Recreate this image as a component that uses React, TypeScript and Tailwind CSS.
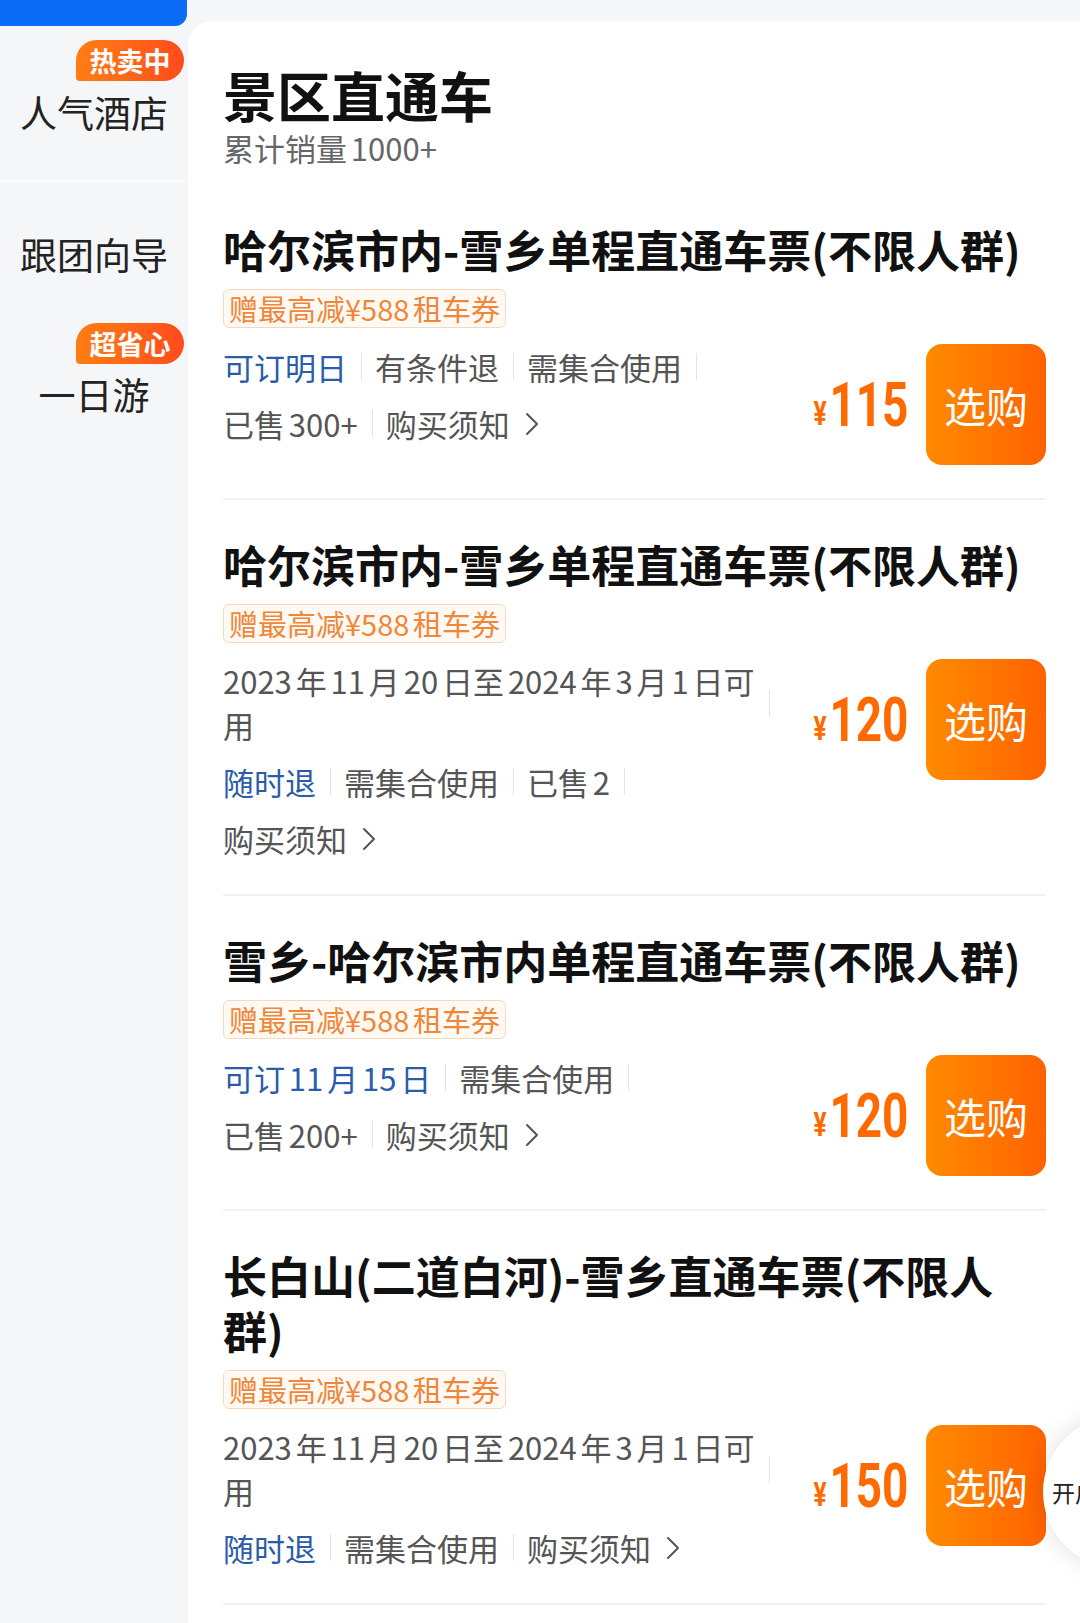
import React from 'react';

type Meta = { text: React.ReactNode; blue?: boolean; last?: boolean; tight?: boolean };

type Product = {
  title: string;
  price: number;
  rows: Meta[][];
};

const dateText = (
  <>
    2023年11月20日至2024年3月1日可
    <br />用
  </>
);

const notice: Meta = { text: '购买须知', last: true };

const products: Product[] = [
  {
    title: '哈尔滨市内-雪乡单程直通车票(不限人群)',
    price: 115,
    rows: [
      [{ text: '可订明日', blue: true }, { text: '有条件退' }, { text: '需集合使用' }],
      [{ text: '已售300+' }, notice]
    ]
  },
  {
    title: '哈尔滨市内-雪乡单程直通车票(不限人群)',
    price: 120,
    rows: [[{ text: dateText, tight: true }], [{ text: '随时退', blue: true }, { text: '需集合使用' }, { text: '已售2' }], [notice]]
  },
  {
    title: '雪乡-哈尔滨市内单程直通车票(不限人群)',
    price: 120,
    rows: [
      [{ text: '可订11月15日', blue: true }, { text: '需集合使用' }],
      [{ text: '已售200+' }, notice]
    ]
  },
  {
    title: '长白山(二道白河)-雪乡直通车票(不限人群)',
    price: 150,
    rows: [[{ text: dateText, tight: true }], [{ text: '随时退', blue: true }, { text: '需集合使用' }, notice]]
  }
];

function Badge({ label, top }: { label: string; top: string }) {
  return (
    <span
      className={`absolute right-[4px] ${top} flex h-[41px] w-[108px] items-center justify-center rounded-[21px] rounded-bl-[4px] bg-gradient-to-r from-[#ff7d12] to-[#ff4a1c] text-[27px] font-bold leading-none text-white`}
    >
      {label}
    </span>
  );
}

function Sidebar() {
  return (
    <aside className="flex w-[188px] shrink-0 flex-col bg-[#f5f6f8]">
      <div className="h-[26px] w-[187px] rounded-br-[12px] bg-[#0b6cf6]" />
      <div className="relative h-[156px] border-b-2 border-[#fafbfc] text-center">
        <Badge label="热卖中" top="top-[14px]" />
        <p className="pt-[66px] text-[37px] leading-[40px] text-[#222]">人气酒店</p>
      </div>
      <div className="h-[130px] text-center">
        <p className="pt-[52px] text-[37px] leading-[40px] text-[#222]">跟团向导</p>
      </div>
      <div className="relative h-[120px] text-center">
        <Badge label="超省心" top="top-[11px]" />
        <p className="pt-[62px] text-[37px] leading-[40px] text-[#222]">一日游</p>
      </div>
    </aside>
  );
}

function Chevron() {
  return (
    <svg viewBox="0 0 14 24" className="ml-[15px] h-[24px] w-[14px]" fill="none" stroke="#555" strokeWidth="2" strokeLinecap="round" strokeLinejoin="round">
      <polyline points="2,2 12,12 2,22" />
    </svg>
  );
}

function MetaItem({ item }: { item: Meta }) {
  if (item.last) {
    return (
      <div className="flex items-center">
        <span>{item.text}</span>
        <Chevron />
      </div>
    );
  }
  return (
    <div className="flex items-center">
      <span className={`${item.blue ? 'text-[#2b5ca8]' : ''} ${item.tight ? 'leading-[44px]' : ''}`}>{item.text}</span>
      <span className="ml-[14px] mr-[13px] h-[27px] w-px shrink-0 bg-[#e4e4e4]" />
    </div>
  );
}

function ProductRow({ product }: { product: Product }) {
  return (
    <div className="border-b-2 border-[#f2f2f2] pb-[33px] pt-[37px]">
      <h3 className="text-[44px] font-bold leading-[55px] text-[#111]">{product.title}</h3>
      <div className="mt-[12px] inline-flex h-[39px] items-center rounded-[6px] border border-[#f6d8bf] bg-[#fff9f3] px-[5px] text-[29px] leading-none text-[#ef873b]">
        赠最高减¥588租车券
      </div>
      <div className="mt-[16px] flex items-start">
        <div className="flex min-w-0 flex-1 flex-col gap-y-[12px] text-[31px] leading-[45px] text-[#555]">
          {product.rows.map((row, r) => (
            <div key={r} className="flex items-center">
              {row.map((m, i) => (
                <MetaItem key={i} item={m} />
              ))}
            </div>
          ))}
        </div>
        <div className="flex shrink-0 items-center">
          <span className="-ml-[34px] inline-flex origin-right scale-x-[0.74] items-end font-['Roboto',sans-serif] font-bold text-[#ff6a00]">
            <span className="mb-[6px] mr-[4px] text-[33px] leading-none">¥</span>
            <span className="text-[62px] leading-none">{product.price}</span>
          </span>
          <button className="ml-[18px] flex h-[121px] w-[120px] shrink-0 items-center justify-center rounded-[16px] bg-gradient-to-r from-[#ff8a00] to-[#ff6200] text-[42px] leading-none text-white">
            选购
          </button>
        </div>
      </div>
    </div>
  );
}

export default function App() {
  return (
    <div className="relative flex h-[1623px] w-[1080px] overflow-hidden bg-[#f5f6f8] font-['Noto_Sans_CJK_SC','Noto_Sans',sans-serif] [text-autospace:normal]">
      <Sidebar />
      <main className="mt-[21px] flex-1 rounded-tl-[24px] bg-white pl-[35px] pr-[34px] pt-[44px]">
        <h1 className="text-[54px] font-bold leading-[60px] text-[#111]">景区直通车</h1>
        <p className="mb-[17px] mt-[3px] text-[31px] leading-[40px] text-[#666]">累计销量1000+</p>
        {products.map((p, i) => (
          <ProductRow key={i} product={p} />
        ))}
      </main>

      <div className="absolute left-[1043px] top-[1416px] flex h-[152px] w-[152px] items-center rounded-full bg-white pl-[9px] shadow-[0_0_24px_rgba(0,0,0,0.12)]">
        <span className="text-[23px] leading-none text-[#222]">开启</span>
      </div>
    </div>
  );
}
